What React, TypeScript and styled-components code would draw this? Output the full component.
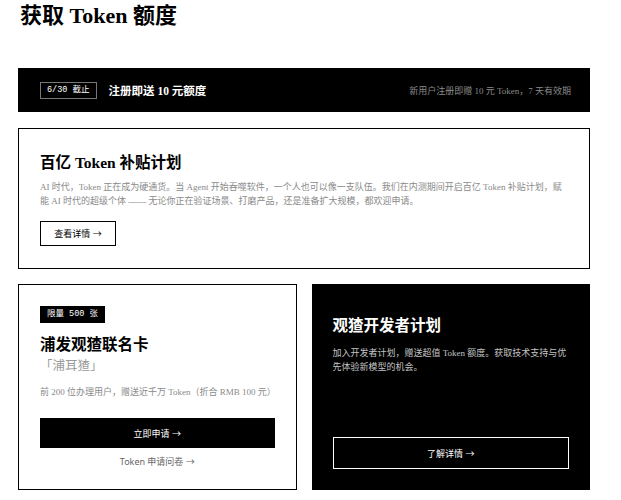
import styled, { createGlobalStyle } from 'styled-components'

const serif = `'Liberation Serif', 'Noto Sans CJK SC', serif`
const mono = `'Liberation Mono', 'DejaVu Sans Mono', 'Noto Sans CJK SC', monospace`
const sans = `'Noto Sans', 'Noto Sans CJK SC', sans-serif`

const GlobalStyle = createGlobalStyle`
  body {
    margin: 0;
    background: #fff;
    font-family: ${serif};
    color: #000;
  }
`

const Page = styled.div`
  width: 572px;
  padding: 3px 0 0 18px;
  display: flex;
  flex-direction: column;
`

const Heading = styled.h1`
  margin: 0 0 0 2px;
  font-size: 22px;
  line-height: 26px;
  font-weight: 700;
  font-family: ${serif};
`

const Banner = styled.div`
  margin-top: 39px;
  height: 44px;
  background: #000;
  display: flex;
  align-items: center;
  padding: 0 19px 0 22px;
  gap: 12px;
`

const Tag = styled.span<{ $dark?: boolean }>`
  font-family: ${mono};
  font-size: 8.5px;
  line-height: 15px;
  padding: 0 6px;
  color: #fff;
  background: ${(p) => (p.$dark ? '#000' : 'transparent')};
  border: 1px solid ${(p) => (p.$dark ? '#000' : '#777')};
  white-space: nowrap;
`

const BannerTitle = styled.span`
  color: #fff;
  font-size: 11.5px;
  font-weight: 700;
`

const BannerNote = styled.span`
  margin-left: auto;
  color: #8a8a8a;
  font-size: 9px;
`

const Card = styled.div<{ $dark?: boolean }>`
  border: 1.5px solid #000;
  background: ${(p) => (p.$dark ? '#000' : '#fff')};
  color: ${(p) => (p.$dark ? '#fff' : '#000')};
  display: flex;
  flex-direction: column;
  align-items: flex-start;
  box-sizing: border-box;
  min-width: 0;
`

const WideCard = styled(Card)`
  margin-top: 16px;
  height: 141px;
  padding: 22px 20px 0 21px;
`

const Title = styled.h2`
  margin: 0;
  font-size: 15.5px;
  line-height: 23px;
  font-weight: 700;
`

const Body = styled.p<{ $light?: boolean; $single?: boolean }>`
  margin: 0;
  font-size: 9px;
  line-height: 14px;
  color: ${(p) => (p.$light ? '#c4c4c4' : '#8a8a8a')};
  white-space: ${(p) => (p.$single ? 'nowrap' : 'normal')};
`

const OutlineButton = styled.button<{ $light?: boolean; $full?: boolean }>`
  background: transparent;
  border: 1.5px solid ${(p) => (p.$light ? '#fff' : '#000')};
  color: ${(p) => (p.$light ? '#fff' : '#000')};
  font-family: ${sans};
  font-size: 9px;
  height: ${(p) => (p.$full ? '32px' : '25px')};
  width: ${(p) => (p.$full ? '100%' : '76px')};
  padding: 0;
  cursor: pointer;
`

const Row = styled.div`
  margin-top: 15px;
  display: grid;
  grid-template-columns: minmax(0, 1fr) minmax(0, 1fr);
  gap: 15px;
`

const OfferCard = styled(Card)`
  height: 206px;
  padding: 21px 21px 0 21px;
`

const DevCard = styled(Card)`
  height: 206px;
  padding: 29px 14px 20px 20px;
`

const SubTitle = styled.div`
  font-size: 12.5px;
  line-height: 20px;
  color: #9a9a9a;
`

const SolidButton = styled.button`
  width: 100%;
  height: 30px;
  background: #000;
  color: #fff;
  border: none;
  font-family: ${sans};
  font-size: 9px;
  cursor: pointer;
`

const TextLink = styled.a`
  align-self: center;
  margin-top: 7px;
  font-family: ${sans};
  font-size: 9px;
  color: #666;
  text-decoration: none;
`

const Push = styled.div`
  margin-top: auto;
  width: calc(100% - 6px);
`

export default function App() {
  return (
    <>
      <GlobalStyle />
      <Page>
        <Heading>获取 Token 额度</Heading>
        <Banner>
          <Tag>6/30 截止</Tag>
          <BannerTitle>注册即送 10 元额度</BannerTitle>
          <BannerNote>新用户注册即赠 10 元 Token，7 天有效期</BannerNote>
        </Banner>
        <WideCard>
          <Title>百亿 Token 补贴计划</Title>
          <Body style={{ marginTop: 6 }}>
            AI 时代，Token 正在成为硬通货。当 Agent 开始吞噬软件，一个人也可以像一支队伍。我们在内测期间开启百亿 Token 补贴计划，赋能 AI 时代的超级个体 —— 无论你正在验证场景、打磨产品，还是准备扩大规模，都欢迎申请。
          </Body>
          <OutlineButton style={{ marginTop: 13 }}>查看详情 →</OutlineButton>
        </WideCard>
        <Row>
          <OfferCard>
            <Tag $dark>限量 500 张</Tag>
            <Title style={{ marginTop: 10 }}>浦发观猹联名卡</Title>
            <SubTitle>「浦耳猹」</SubTitle>
            <Body $single style={{ marginTop: 9 }}>前 200 位办理用户，赠送近千万 Token（折合 RMB 100 元）</Body>
            <SolidButton style={{ marginTop: 19 }}>立即申请 →</SolidButton>
            <TextLink href="#">Token 申请问卷 →</TextLink>
          </OfferCard>
          <DevCard $dark>
            <Title>观猹开发者计划</Title>
            <Body $light style={{ marginTop: 9 }}>
              加入开发者计划，赠送超值 Token 额度。获取技术支持与优先体验新模型的机会。
            </Body>
            <Push>
              <OutlineButton $light $full>了解详情 →</OutlineButton>
            </Push>
          </DevCard>
        </Row>
      </Page>
    </>
  )
}
